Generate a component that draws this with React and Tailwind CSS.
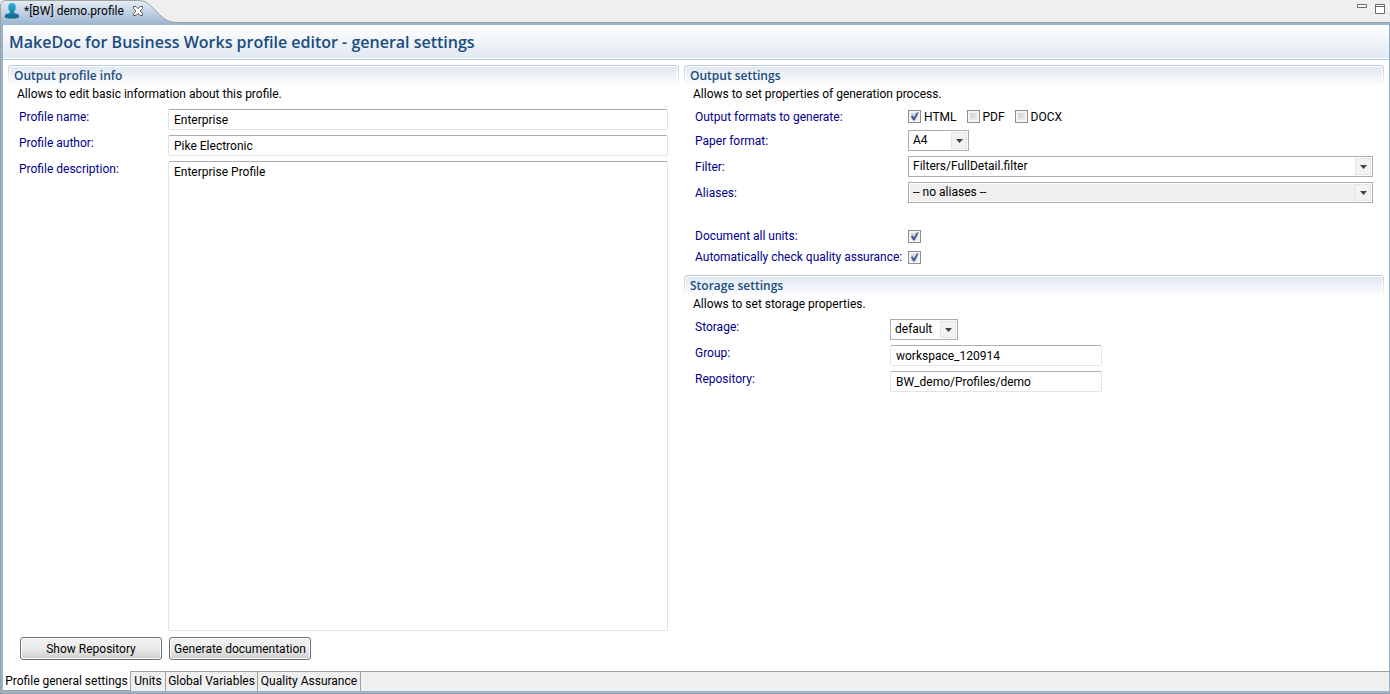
const inputClass =
  'h-[21px] rounded-[2px] border border-[#e2e3ea] border-t-[#abadb3] bg-white px-[5px] text-xs leading-4 text-black outline-none';

function Section({ title, note, className = '', children }) {
  return (
    <section className={`flex flex-col ${className}`}>
      <div className="flex h-[22px] rounded-t-[4px] bg-linear-to-b from-[#b9c9dc] to-white px-px pt-px">
        <h2 className="flex-1 rounded-t-[3px] border border-b-0 border-white bg-linear-to-b from-[#e1e8f1] to-white px-1 font-['Open_Sans',sans-serif] text-xs leading-[18px] font-semibold text-[#194c7f]">
          {title}
        </h2>
      </div>
      <p className="px-[9px] text-xs leading-[14px]">{note}</p>
      {children}
    </section>
  );
}

function Select({ id, value, className = '', muted = false }) {
  return (
    <div className={`relative h-[21px] ${className}`}>
      <select
        id={id}
        defaultValue={value}
        className={`h-full w-full appearance-none border border-[#abadb3] pr-5 pb-px pl-1 text-xs leading-4 text-black outline-none ${muted ? 'bg-[#efefef] shadow-[inset_0_0_0_1px_white]' : 'bg-white'}`}
      >
        <option>{value}</option>
      </select>
      <span className="pointer-events-none absolute inset-y-0.5 right-0.5 flex w-4 items-center justify-center border border-[#e4e4e4] bg-[#f3f3f3]">
        <svg width="7" height="4" viewBox="0 0 7 4" aria-hidden="true">
          <path d="M0 0h7L3.5 4z" fill="#444" />
        </svg>
      </span>
    </div>
  );
}

function Check({ id, checked = false }) {
  return (
    <span className="relative block size-[13px] shrink-0">
      <input
        id={id}
        type="checkbox"
        defaultChecked={checked}
        className="peer block size-[13px] appearance-none border border-[#8e8f8f] bg-linear-to-br from-[#c4c9d0] to-[#f6f6f6] shadow-[inset_0_0_0_2px_#f4f4f4]"
      />
      <svg
        className="pointer-events-none absolute inset-0 hidden peer-checked:block"
        width="13"
        height="13"
        viewBox="0 0 13 13"
        aria-hidden="true"
      >
        <path d="M2.800 6.200 4.600 5.200 5.900 7.200 9 2.200 10.700 2.400 6.700 10.400H5.200z" fill="#4a5f97" />
      </svg>
    </span>
  );
}

function Label({ htmlFor, children }) {
  return (
    <label htmlFor={htmlFor} className="text-xs leading-4 whitespace-nowrap text-[#00008b]">
      {children}
    </label>
  );
}

const formats = [
  { name: 'HTML', checked: true },
  { name: 'PDF', checked: false },
  { name: 'DOCX', checked: false },
];

const pageTab = 'h-5 border-t border-r border-[#a0a0a0] pb-0.5 text-center whitespace-nowrap';

export default function App() {
  return (
    <div className="flex min-h-screen flex-col bg-[#efefef] font-['Roboto',sans-serif] text-xs text-black">
      <header className="relative flex h-[22px] justify-between">
        <svg
          className="absolute top-0 left-0"
          width="180"
          height="25"
          viewBox="0 0 180 25"
          aria-hidden="true"
        >
          <defs>
            <linearGradient id="tabFill" x1="0" y1="0" x2="0" y2="1">
              <stop offset="0" stopColor="#e6edf5" />
              <stop offset="1" stopColor="#99b4d1" />
            </linearGradient>
          </defs>
          <path
            d="M.5 25V6C.5 2.500 2.500.5 6 .5H138C146 .5 149 4 154 9 162 17 166 22.500 177 22.500H180V25z"
            fill="url(#tabFill)"
          />
          <path
            d="M.5 25V6C.5 2.500 2.500.5 6 .5H138C146 .5 149 4 154 9 162 17 166 22.500 177 22.500H180"
            fill="none"
            stroke="#a0a0a0"
          />
        </svg>
        <div className="relative flex items-center gap-1 pl-1">
          <svg width="16" height="18" viewBox="0 0 16 18" aria-hidden="true">
            <defs>
              <linearGradient id="person" x1="0" y1="0" x2="0" y2="1">
                <stop offset="0" stopColor="#2fb4dc" />
                <stop offset="1" stopColor="#0d6686" />
              </linearGradient>
            </defs>
            <path
              d="M8 1C5.500 1 4.300 2.500 4.300 5 4.300 7.200 5 8.600 5.800 9.600V11C3.500 11.600.8 12 .7 14.500.7 16 3 16.500 8 16.500S15.300 16 15.300 14.500C15.200 12 12.500 11.600 10.200 11V9.600C11 8.600 11.700 7.200 11.700 5 11.700 2.500 10.500 1 8 1z"
              fill="url(#person)"
            />
          </svg>
          <span className="leading-4">*[BW] demo.profile</span>
          <button type="button" aria-label="Close tab" className="ml-1">
            <svg width="12" height="12" viewBox="0 0 12 12" aria-hidden="true">
              <path
                d="M1.500 1.500H4L6 3.700 8 1.500h2.500V3.500L8.200 6l2.300 2.500v2H8L6 8.300 4 10.500H1.500v-2L3.800 6 1.500 3.500z"
                fill="#fff"
                stroke="#5f5f5f"
              />
            </svg>
          </button>
        </div>
        <div className="flex items-start gap-2 pt-1 pr-[5px]">
          <button type="button" aria-label="Minimize">
            <svg width="10" height="10" viewBox="0 0 10 10" aria-hidden="true">
              <path d="M.5.5h9v3h-9z" fill="#fff" stroke="#6a6a6a" />
            </svg>
          </button>
          <button type="button" aria-label="Maximize">
            <svg width="10" height="10" viewBox="0 0 10 10" aria-hidden="true">
              <path d="M.5.5h9v9h-9zM.5 2.500h9" fill="#fff" stroke="#6a6a6a" />
            </svg>
          </button>
        </div>
      </header>

      <div className="flex flex-1 flex-col border-t border-b border-l border-[#a0a0a0]">
        <div className="flex flex-1 flex-col border-y-2 border-r border-l-2 border-[#99b4d1] bg-white">
          <div className="border-b border-[#b9c9dc] pb-px">
            <h1 className="h-[33px] bg-linear-to-b from-white to-[#e1e8f1] px-1.5 font-['Open_Sans',sans-serif] text-base leading-[34px] font-semibold text-[#194c7f]">
              MakeDoc for Business Works profile editor - general settings
            </h1>
          </div>

          <main className="grid flex-1 grid-cols-[671fr_700fr] gap-[5px] px-[5px] pt-[5px] pb-[11px]">
            <Section title="Output profile info" note="Allows to edit basic information about this profile.">
              <div className="mt-2 grid flex-1 grid-cols-[149px_1fr] grid-rows-[21px_21px_1fr] gap-y-[5px] pr-[11px] pl-[11px]">
                <Label htmlFor="profile-name">Profile name:</Label>
                <input id="profile-name" defaultValue="Enterprise" className={inputClass} />
                <Label htmlFor="profile-author">Profile author:</Label>
                <input id="profile-author" defaultValue="Pike Electronic" className={inputClass} />
                <Label htmlFor="profile-description">Profile description:</Label>
                <textarea
                  id="profile-description"
                  defaultValue="Enterprise Profile"
                  className="resize-none rounded-[2px] border border-[#e2e3ea] border-t-[#abadb3] bg-white px-[5px] pt-0.5 text-xs leading-4 outline-none"
                />
              </div>
              <div className="mt-[6px] flex gap-[7px] pl-3">
                {['Show Repository', 'Generate documentation'].map((text) => (
                  <button
                    key={text}
                    type="button"
                    className="h-[23px] w-[142px] rounded-[3px] border border-[#707070] bg-linear-to-b from-[#f2f2f2] from-0% via-[#ebebeb] via-50% to-[#cfcfcf] text-xs leading-4 whitespace-nowrap shadow-[inset_0_0_0_1px_#fcfcfc]"
                  >
                    {text}
                  </button>
                ))}
              </div>
            </Section>

            <div className="flex flex-col">
              <Section title="Output settings" note="Allows to set properties of generation process.">
                <div className="mt-2 grid grid-cols-[213px_1fr] pr-[11px] pl-[11px]">
                  <span className="leading-4 whitespace-nowrap text-[#00008b]">Output formats to generate:</span>
                  <div className="flex h-[21px] items-start gap-2.5 pt-px">
                    {formats.map((format) => (
                      <label key={format.name} className="flex items-start gap-[3px] leading-[14px]">
                        <Check checked={format.checked} />
                        {format.name}
                      </label>
                    ))}
                  </div>
                  <div className="flex h-[26px] items-start pt-[3px]">
                    <Label htmlFor="paper">Paper format:</Label>
                  </div>
                  <Select id="paper" value="A4" className="w-[61px]" />
                  <div className="flex h-[26px] items-start pt-[3px]">
                    <Label htmlFor="filter">Filter:</Label>
                  </div>
                  <Select id="filter" value="Filters/FullDetail.filter" />
                  <div className="flex h-[46px] items-start pt-[3px]">
                    <Label htmlFor="aliases">Aliases:</Label>
                  </div>
                  <Select id="aliases" value="-- no aliases --" muted />
                </div>
                <div className="grid grid-cols-[213px_1fr] items-center gap-y-[5px] pb-2.5 pl-[11px]">
                  <Label htmlFor="all-units">Document all units:</Label>
                  <Check id="all-units" checked />
                  <Label htmlFor="auto-check">Automatically check quality assurance:</Label>
                  <Check id="auto-check" checked />
                </div>
              </Section>

              <Section title="Storage settings" note="Allows to set storage properties.">
                <div className="mt-2 grid grid-cols-[195px_212px] gap-y-[5px] pl-[11px]">
                  <Label htmlFor="storage">Storage:</Label>
                  <Select id="storage" value="default" className="w-[68px]" />
                  <Label htmlFor="group">Group:</Label>
                  <input id="group" defaultValue="workspace_120914" className={inputClass} />
                  <Label htmlFor="repository">Repository:</Label>
                  <input id="repository" defaultValue="BW_demo/Profiles/demo" className={inputClass} />
                </div>
              </Section>
            </div>
          </main>

          <nav className="flex h-5 bg-[#efefef] leading-[18px]" aria-label="Editor pages">
            <button type="button" className="h-5 w-32 border-r border-b border-[#a0a0a0] bg-white text-center whitespace-nowrap">
              Profile general settings
            </button>
            <button type="button" className={`w-[35px] ${pageTab}`}>Units</button>
            <button type="button" className={`w-[92px] ${pageTab}`}>Global Variables</button>
            <button type="button" className={`w-[103px] ${pageTab}`}>Quality Assurance</button>
            <span className="flex-1 border-t border-[#a0a0a0]" />
          </nav>
        </div>
      </div>
    </div>
  );
}
